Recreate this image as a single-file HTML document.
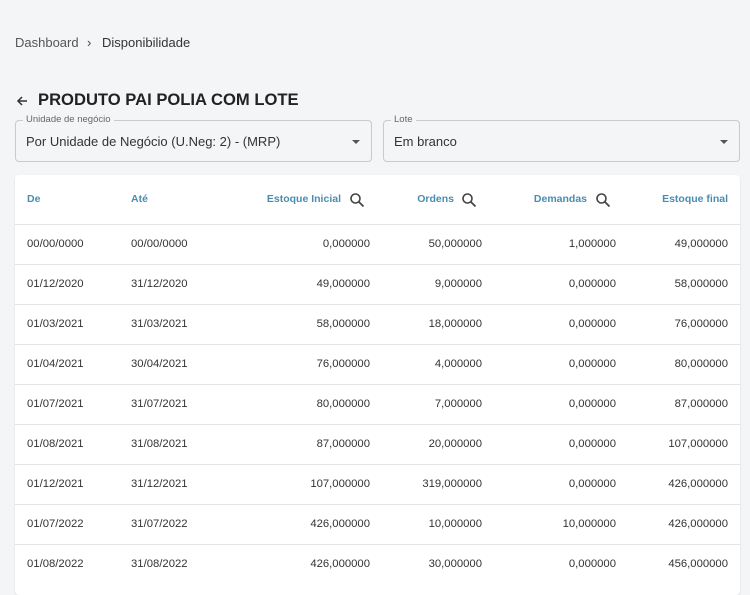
<!DOCTYPE html><html><head><meta charset="utf-8"><style>
body{margin:0;width:750px;height:586px;overflow:hidden;background:#f4f5f7;font-family:"Liberation Sans",Arial,sans-serif;color:#333;position:relative}
.a{position:absolute;white-space:nowrap}
.bc{top:35px;font-size:13px;color:#555}
.f{position:absolute;top:120px;height:42px;border:1px solid #c8cacd;border-radius:4px;box-sizing:border-box}
.f .l{position:absolute;top:-7px;left:7px;background:#f4f5f7;padding:0 3px;font-size:9.5px;color:#666}
.f .v{position:absolute;left:10px;top:13px;font-size:13px;color:#333}
.f .c{position:absolute;right:11px;top:19px;border-left:4px solid transparent;border-right:4px solid transparent;border-top:4px solid #555}
.card{position:absolute;left:15px;top:175px;width:725px;height:420px;background:#fff;border-radius:4px;box-shadow:0 1px 2px rgba(0,0,0,.1)}
.row{position:absolute;left:0;width:725px;height:40px;border-top:1px solid #e3e4e6;font-size:11.3px;color:#333}
.row span,.h span{position:absolute;top:13px}
.h{position:absolute;left:0;top:0;width:725px;height:50px;font-size:10.5px;font-weight:bold;color:#4a8db0}
.h span{top:18px}
.h svg{position:absolute;top:17px}
</style></head><body>
<div class="a bc" style="left:15px">Dashboard</div>
<div class="a bc" style="left:87px;color:#444;font-size:13px">›</div>
<div class="a bc" style="left:102px;color:#333">Disponibilidade</div>
<svg class="a" style="left:15px;top:94px" width="14" height="14" viewBox="0 0 14 14"><path d="M12 7H3M7 3L3 7l4 4" stroke="#333" stroke-width="1.5" fill="none"/></svg>
<div class="a" style="left:38px;top:90px;font-size:16.6px;font-weight:bold;color:#222">PRODUTO PAI POLIA COM LOTE</div>
<div class="f" style="left:15px;width:357px"><div class="l">Unidade de negócio</div><div class="v">Por Unidade de Negócio (U.Neg: 2) - (MRP)</div><div class="c"></div></div>
<div class="f" style="left:383px;width:357px"><div class="l">Lote</div><div class="v">Em branco</div><div class="c"></div></div>
<div class="card">
<div class="h"><span style="left:12px">De</span><span style="left:116px">Até</span><span style="right:399px">Estoque Inicial</span><span style="right:286px">Ordens</span><span style="right:153px">Demandas</span><span style="right:12px">Estoque final</span>
<svg style="left:334px" width="16" height="16" viewBox="0 0 16 16"><circle cx="6.5" cy="6.5" r="4.5" stroke="#444" stroke-width="1.6" fill="none"/><path d="M10 10l4.5 4.5" stroke="#444" stroke-width="1.8"/></svg>
<svg style="left:446px" width="16" height="16" viewBox="0 0 16 16"><circle cx="6.5" cy="6.5" r="4.5" stroke="#444" stroke-width="1.6" fill="none"/><path d="M10 10l4.5 4.5" stroke="#444" stroke-width="1.8"/></svg>
<svg style="left:580px" width="16" height="16" viewBox="0 0 16 16"><circle cx="6.5" cy="6.5" r="4.5" stroke="#444" stroke-width="1.6" fill="none"/><path d="M10 10l4.5 4.5" stroke="#444" stroke-width="1.8"/></svg>
</div>
<div class="row" style="top:49px"><span style="left:12px">00/00/0000</span><span style="left:116px">00/00/0000</span><span style="right:370px">0,000000</span><span style="right:258px">50,000000</span><span style="right:124px">1,000000</span><span style="right:12px">49,000000</span></div>
<div class="row" style="top:89px"><span style="left:12px">01/12/2020</span><span style="left:116px">31/12/2020</span><span style="right:370px">49,000000</span><span style="right:258px">9,000000</span><span style="right:124px">0,000000</span><span style="right:12px">58,000000</span></div>
<div class="row" style="top:129px"><span style="left:12px">01/03/2021</span><span style="left:116px">31/03/2021</span><span style="right:370px">58,000000</span><span style="right:258px">18,000000</span><span style="right:124px">0,000000</span><span style="right:12px">76,000000</span></div>
<div class="row" style="top:169px"><span style="left:12px">01/04/2021</span><span style="left:116px">30/04/2021</span><span style="right:370px">76,000000</span><span style="right:258px">4,000000</span><span style="right:124px">0,000000</span><span style="right:12px">80,000000</span></div>
<div class="row" style="top:209px"><span style="left:12px">01/07/2021</span><span style="left:116px">31/07/2021</span><span style="right:370px">80,000000</span><span style="right:258px">7,000000</span><span style="right:124px">0,000000</span><span style="right:12px">87,000000</span></div>
<div class="row" style="top:249px"><span style="left:12px">01/08/2021</span><span style="left:116px">31/08/2021</span><span style="right:370px">87,000000</span><span style="right:258px">20,000000</span><span style="right:124px">0,000000</span><span style="right:12px">107,000000</span></div>
<div class="row" style="top:289px"><span style="left:12px">01/12/2021</span><span style="left:116px">31/12/2021</span><span style="right:370px">107,000000</span><span style="right:258px">319,000000</span><span style="right:124px">0,000000</span><span style="right:12px">426,000000</span></div>
<div class="row" style="top:329px"><span style="left:12px">01/07/2022</span><span style="left:116px">31/07/2022</span><span style="right:370px">426,000000</span><span style="right:258px">10,000000</span><span style="right:124px">10,000000</span><span style="right:12px">426,000000</span></div>
<div class="row" style="top:369px"><span style="left:12px">01/08/2022</span><span style="left:116px">31/08/2022</span><span style="right:370px">426,000000</span><span style="right:258px">30,000000</span><span style="right:124px">0,000000</span><span style="right:12px">456,000000</span></div>
</div>
</body></html>
